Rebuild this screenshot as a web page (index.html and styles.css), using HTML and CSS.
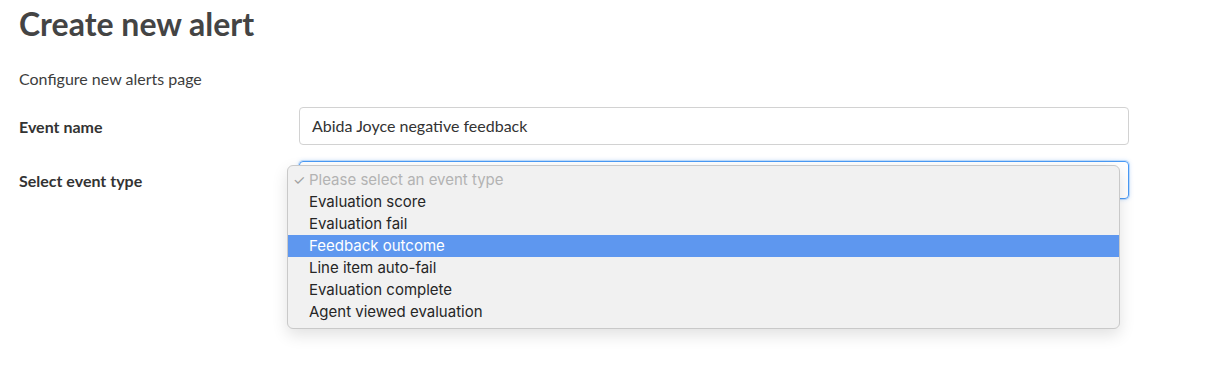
FILE: index.html
```html
<!DOCTYPE html>
<html>
<head>
    <meta charset="utf-8">
    <link rel="stylesheet" href="styles.css">
</head>
<body>
    <h1 class="title">Create new alert</h1>
    <p class="intro">Configure new alerts page</p>

    <div class="form">
        <div class="row">
            <label class="label">Event name</label>
            <div class="field">
                <div class="input">Abida Joyce negative feedback</div>
            </div>
        </div>

        <div class="row">
            <label class="label">Select event type</label>
            <div class="field">
                <div class="select focused"></div>
                <ul class="menu">
                    <li class="option placeholder"><span class="check">✓</span>Please select an event type</li>
                    <li class="option">Evaluation score</li>
                    <li class="option">Evaluation fail</li>
                    <li class="option active">Feedback outcome</li>
                    <li class="option">Line item auto-fail</li>
                    <li class="option">Evaluation complete</li>
                    <li class="option">Agent viewed evaluation</li>
                </ul>
            </div>
        </div>
    </div>
</body>
</html>
```

FILE: styles.css
```css
html {
    height: 100%;
}

body {
    margin: 0;
    padding: 0 19px;
    min-height: 100%;
    font-family: Lato, "Open Sans", sans-serif;
    color: #3d3d3d;
    background: #fff;
}

.title {
    font-size: 32px;
    font-weight: 700;
    color: #444;
    margin: 4px 0 0 0;
    line-height: 40px;
}

.intro {
    font-size: 16px;
    margin: 25px 0 0 0;
    line-height: 20px;
}

.form {
    margin-top: 18px;
}

.row {
    display: flex;
    align-items: center;
    margin-bottom: 16px;
}

.label {
    width: 280px;
    font-size: 16px;
    font-weight: 700;
    color: #333;
}

.field {
    position: relative;
    width: 830px;
}

.input,
.select {
    box-sizing: border-box;
    height: 38px;
    border: 1px solid #d2d2d2;
    border-radius: 4px;
    padding: 0 12px;
    font-size: 16px;
    line-height: 36px;
    color: #333;
}

.select.focused {
    border-color: #4a9af5;
    box-shadow: 0 0 0 1px rgba(74, 154, 245, 0.25), 0 0 4px rgba(74, 154, 245, 0.35);
}

.menu {
    position: absolute;
    left: -12px;
    top: 4px;
    width: 833px;
    box-sizing: border-box;
    margin: 0;
    padding: 3px 0 5px 0;
    list-style: none;
    background: #f1f1f1;
    border: 1px solid #c9c9c9;
    border-radius: 6px;
    box-shadow: 0 6px 16px rgba(0, 0, 0, 0.12);
    font-family: Inter, "Liberation Sans", sans-serif;
    font-size: 15px;
}

.option {
    height: 22px;
    line-height: 22px;
    padding-left: 21px;
    color: #262626;
    position: relative;
}

.option.placeholder {
    color: #b3b3b3;
}

.option.active {
    background: #5e97ef;
    color: #fff;
}

.check {
    position: absolute;
    left: 5px;
    font-size: 14px;
    color: #a0a0a0;
}
```
